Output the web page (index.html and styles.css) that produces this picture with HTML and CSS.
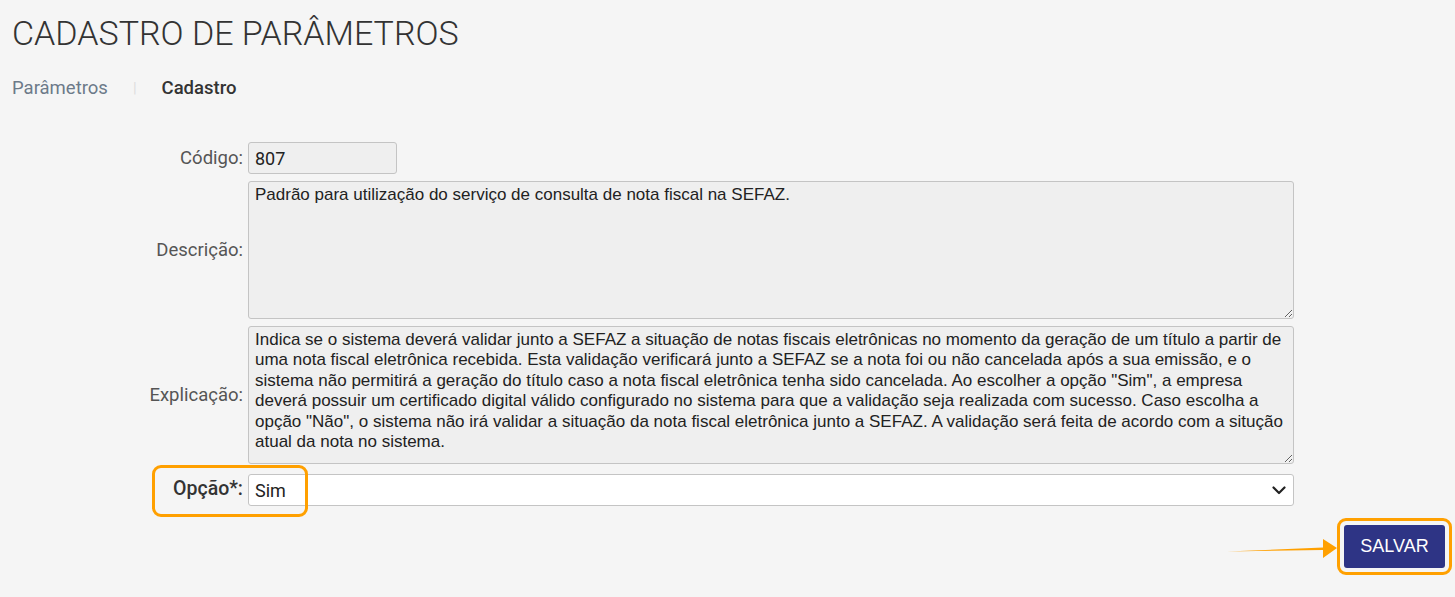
FILE: index.html
```html
<!DOCTYPE html>
<html lang="pt-BR">
<head>
  <meta charset="UTF-8" />
  <meta name="viewport" content="width=device-width, initial-scale=1.0" />
  <title>Cadastro de Parâmetros</title>
  <link rel="stylesheet" href="styles.css">
</head>
<body>
  <div class="page-header">
    <h1>CADASTRO DE PARÂMETROS</h1>
    <nav class="breadcrumb">
      <a href="#">Parâmetros</a>
      <span class="sep">|</span>
      <span class="current">Cadastro</span>
    </nav>
  </div>

  <form class="param-form" onsubmit="return false;">
    <label for="codigo">Código:</label>
    <input type="text" id="codigo" class="short" value="807" readonly>

    <label for="descricao">Descrição:</label>
    <textarea id="descricao" readonly>Padrão para utilização do serviço de consulta de nota fiscal na SEFAZ.</textarea>

    <label for="explicacao">Explicação:</label>
    <textarea id="explicacao" readonly>Indica se o sistema deverá validar junto a SEFAZ a situação de notas fiscais eletrônicas no momento da geração de um título a partir de uma nota fiscal eletrônica recebida. Esta validação verificará junto a SEFAZ se a nota foi ou não cancelada após a sua emissão, e o sistema não permitirá a geração do título caso a nota fiscal eletrônica tenha sido cancelada. Ao escolher a opção "Sim", a empresa deverá possuir um certificado digital válido configurado no sistema para que a validação seja realizada com sucesso. Caso escolha a opção "Não", o sistema não irá validar a situação da nota fiscal eletrônica junto a SEFAZ. A validação será feita de acordo com a situção atual da nota no sistema.</textarea>

    <label for="opcao" class="required">Opção*:</label>
    <div class="select-wrap">
      <select id="opcao">
        <option>Sim</option>
        <option>Não</option>
      </select>
      <svg class="chevron" width="14" height="9" viewBox="0 0 14 9"><path d="M1.5 1.5 L7 7 L12.5 1.5" fill="none" stroke="#222" stroke-width="2.2" stroke-linecap="round" stroke-linejoin="round"/></svg>
    </div>
    <div class="highlight opcao-mark"></div>
  </form>

  <div class="actions">
    <svg class="arrow" width="112" height="24" viewBox="0 0 112 24"><path d="M0 15.5 L96 11.5 L96 3 L110 12 L96 22 L96 14 Z" fill="#ffa000"/></svg>
    <div class="btn-mark">
      <button type="submit" class="save-btn">SALVAR</button>
    </div>
  </div>
</body>
</html>
```

FILE: styles.css
```css
body {
  margin: 0;
  background-color: #f5f5f5;
  font-family: Roboto, "Liberation Sans", sans-serif;
  color: #333;
}
.page-header {
  padding: 13px 12px 0;
}
h1 {
  margin: 0;
  font-weight: 300;
  font-size: 34px;
  color: #333;
}
.breadcrumb {
  margin-top: 24px;
  font-size: 18.5px;
  display: flex;
  align-items: center;
}
.breadcrumb a {
  color: #6c7a89;
  text-decoration: none;
}
.breadcrumb .sep {
  color: #ddd;
  margin: 0 25px 0 25px;
  font-size: 15px;
}
.breadcrumb .current {
  font-weight: 500;
  color: #333;
}
.param-form {
  margin-top: 43px;
  display: grid;
  grid-template-columns: 243px 1046px;
  column-gap: 5px;
  row-gap: 7px;
  align-items: center;
  position: relative;
}
.param-form label {
  text-align: right;
  font-size: 18.5px;
  color: #555;
}
.param-form label.required {
  font-size: 19.5px;
  font-weight: 500;
  color: #333;
}
input, textarea, select {
  font-family: Roboto, "Liberation Sans", sans-serif;
  font-size: 18px;
  color: #222;
  border: 1px solid #c4c4c4;
  border-radius: 3px;
  box-sizing: border-box;
}
input.short {
  width: 149px;
  height: 32px;
  padding: 0 6px;
  background-color: #efefef;
}
textarea {
  width: 100%;
  height: 138px;
  padding: 3px 6px;
  background-color: #efefef;
  font-family: Arial, "Liberation Sans", sans-serif;
  font-size: 17px;
  line-height: 20.4px;
  resize: vertical;
}
.select-wrap {
  position: relative;
  margin-top: 3px;
}
select {
  width: 100%;
  height: 32px;
  padding: 0 6px;
  background-color: #fff;
  appearance: none;
  -webkit-appearance: none;
}
.chevron {
  position: absolute;
  right: 8px;
  top: 12px;
  pointer-events: none;
}
.highlight {
  position: absolute;
  border: 3px solid #ffa000;
  border-radius: 9px;
  pointer-events: none;
}
.opcao-mark {
  left: 152px;
  top: 323px;
  width: 150px;
  height: 46px;
}
.actions {
  display: flex;
  justify-content: flex-end;
  align-items: center;
  padding: 12px 3px 0 0;
}
.arrow {
  margin-right: -2px;
  margin-top: 2px;
}
.btn-mark {
  border: 3px solid #ffa000;
  border-radius: 9px;
  padding: 4px;
}
.save-btn {
  display: block;
  width: 101px;
  height: 43px;
  background-color: #2e3485;
  color: #fff;
  border: none;
  border-radius: 3px;
  font-family: Arial, "Liberation Sans", sans-serif;
  font-size: 18px;
  cursor: pointer;
}
```
